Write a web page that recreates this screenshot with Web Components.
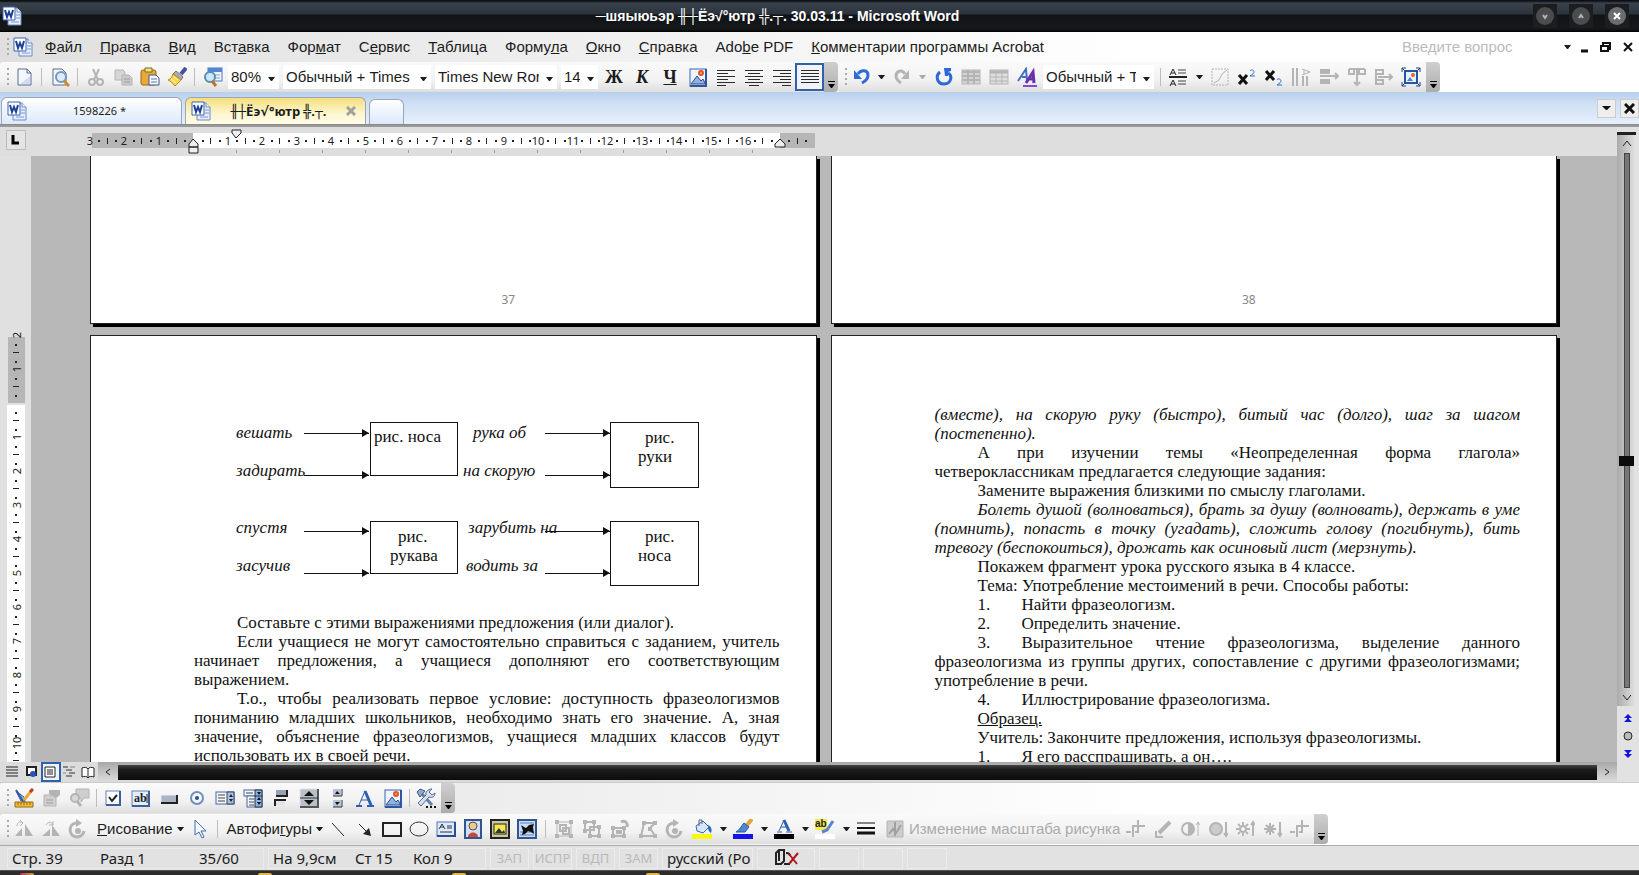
<!DOCTYPE html>
<html lang="ru">
<head>
<meta charset="utf-8">
<title>Microsoft Word</title>
<style>
	html, body {
		margin: 0;
		height: 100%;
		overflow: hidden;
		font: 15px/20px "Liberation Sans", "DejaVu Sans", sans-serif;
		color: #1c1c1c;
	}
</style>
</head>
<body>
<word-window></word-window>

<script>
const SVG = (body, w = 20, h = 20) => `<svg width="${w}" height="${h}" viewBox="0 0 ${w} ${h}" fill="none" aria-hidden="true">${body}</svg>`;

const G = '#b4b4b4';

const ICONS = {
	word: SVG('<path d="M6 2h9l4 4v13H6z" fill="#e6eefb" stroke="#6b8cc8"/><path d="M15 2v4h4" stroke="#6b8cc8" fill="#fff"/><path d="M14 9h4M14 12h4M9 16h8" stroke="#7d9ad0"/><path d="M1 1h12v13H1z" fill="#fff" stroke="#3d62b0"/><path d="M3 4l2 7 2-5 2 5 2-7" stroke="#1d3f94" stroke-width="2"/>'),
	page: SVG('<path d="M4 2h9l4 4v12H4z" fill="#f4f8fe" stroke="#5b6d8f"/><path d="M13 2v4h4" stroke="#5b6d8f"/><path d="M6 17h10V9z" fill="#cfdcf2"/>'),
	preview: SVG('<path d="M3 2h9l4 4v12H3z" fill="#f4f8fe" stroke="#5b6d8f"/><circle cx="11" cy="10" r="5" fill="#d9ecfb" stroke="#7795b8" stroke-width="2"/><path d="M14 14l5 5" stroke="#d08a2c" stroke-width="3"/>'),
	cut: SVG(`<path d="M7 2l5 11M13 2L8 13" stroke="${G}" stroke-width="2"/><circle cx="6" cy="15" r="3" stroke="${G}" stroke-width="2"/><circle cx="14" cy="15" r="3" stroke="${G}" stroke-width="2"/>`),
	copy: SVG(`<path d="M2 3h8l2 2v8H2z" fill="#d6d6d6" stroke="${G}"/><path d="M9 8h7l3 3v7H9z" fill="#cacaca" stroke="${G}"/><path d="M11 12h6M11 15h6" stroke="#999"/>`),
	paste: SVG('<rect x="1" y="3" width="15" height="15" rx="2" fill="#e9a93a" stroke="#9a6415"/><path d="M5 1h7v4H5z" fill="#f7e36c" stroke="#6d6d2c"/><path d="M9 8h7l3 3v7H9z" fill="#f5f9ff" stroke="#3f5680"/><path d="M11 12h6M11 15h6" stroke="#5b79b5"/>'),
	brush: SVG('<path d="M19 1l-5 6" stroke="#46529c" stroke-width="4"/><path d="M9 4l7 6-2 3-8-6z" fill="#a9adb5" stroke="#6d7077"/><path d="M6 7l8 6-6 6c-2-3-5-5-7-6 3-1 4-3 5-6z" fill="#f8d654" stroke="#b98a1c"/><path d="M4 12l5 4M7 10l4 3" stroke="#fff5b5"/>'),
	research: SVG('<rect x="5" y="1" width="14" height="13" fill="#eef4fd" stroke="#4d77bd"/><path d="M5 3h14" stroke="#4f86d8" stroke-width="4"/><path d="M8 8h9M10 11h7" stroke="#8aa6d4"/><circle cx="7" cy="10" r="5" fill="#c8e9fb" stroke="#5f8ca8" stroke-width="2"/><path d="M9 14l4 5" stroke="#b7772b" stroke-width="3"/>'),
	picture: SVG('<rect x="2" y="2" width="16" height="17" fill="#eef5ff" stroke="#3a66b2"/><path d="M18 2v17H2" stroke="#2b57a5" stroke-width="2"/><circle cx="13" cy="6" r="2" fill="#f6b23c" stroke="#e2512a" stroke-width="2"/><path d="M3 17l6-8 4 5 2-2 2 4v1z" fill="#8fb2e0" stroke="#2b4c88"/>'),
	left: SVG('<path d="M1 3h18M1 6h11M1 9h18M1 12h11M1 15h18M1 18h9" stroke="#2a2a2a" shape-rendering="crispEdges"/>'),
	center: SVG('<path d="M1 3h18M4 6h12M1 9h18M4 12h12M1 15h18M5 18h10" stroke="#2a2a2a" shape-rendering="crispEdges"/>'),
	right: SVG('<path d="M1 3h18M8 6h11M1 9h18M8 12h11M1 15h18M10 18h9" stroke="#2a2a2a" shape-rendering="crispEdges"/>'),
	justify: SVG('<path d="M1 3h18M1 6h18M1 9h18M1 12h18M1 15h18" stroke="#2a2a2a" shape-rendering="crispEdges"/>'),
	undo: SVG('<path d="M6 7c3-5 10-4 10 1 0 3-2 6-6 8" stroke="#2f6bd8" stroke-width="3"/><path d="M2 3v9h8z" fill="#2f6bd8"/>', 18),
	redo: SVG(`<path d="M12 7c-3-5-9-3-9 2 0 3 2 5 5 7" stroke="${G}" stroke-width="3"/><path d="M16 3v9H8z" fill="${G}"/>`, 18),
	reload: SVG('<path d="M6 5c-5 4-3 12 4 12s9-8 4-11" stroke="#2b69d6" stroke-width="3"/><path d="M10 1h7v3l-3 1v4h-3z" fill="#2b69d6"/>'),
	table: SVG(`<rect x="1" y="3" width="18" height="14" fill="#d4d4d4" stroke="${G}"/><path d="M1 5h18M1 9h18M1 13h18M7 3v14M13 3v14" stroke="${G}" stroke-width="2"/>`),
	table2: SVG(`<rect x="1" y="3" width="18" height="14" fill="#dedede" stroke="${G}"/><path d="M1 5h18" stroke="${G}" stroke-width="3"/><path d="M1 10h18M1 14h18M7 3v14M13 3v14" stroke="${G}"/>`),
	styles: SVG('<path d="M1 14L9 2l1 12M5 10h5" stroke="#3f6fc2" stroke-width="2"/><path d="M9 16l7-11 1 11M12 12h5" stroke="#6a2fae" stroke-width="3"/><path d="M6 19h14" stroke="#7b4fd0" stroke-width="2"/>'),
	spacing: SVG('<path d="M2 8l3-6 3 6M3 6h4M2 19l3-6 3 6M3 17h4" stroke="#222"/><path d="M1 10h18" stroke="#222" stroke-width="2"/><path d="M10 3h8M10 6h8M10 14h8M10 17h8" stroke="#444"/>'),
	chart: SVG(`<rect x="2" y="2" width="16" height="16" stroke="${G}" stroke-dasharray="2 1"/><path d="M4 16l5-3 3-6 5-4" stroke="${G}"/>`),
	vtext: SVG(`<path d="M2 1v18M6 1v18" stroke="${G}" stroke-width="2"/><path d="M12 9v10M16 9v10" stroke="${G}" stroke-width="2"/><path d="M11 2l8 3-8 3M13 3v4" stroke="${G}"/>`),
	alignA: SVG(`<path d="M1 2h10v5H1zM1 12h10v5H1z" fill="${G}"/><path d="M1 9h18M16 6l3 3-3 3" stroke="${G}" stroke-width="2"/>`),
	alignB: SVG(`<path d="M2 2h16M2 2v5h5V2M12 2v5h6V2M10 2v16M7 15l3 3 3-3" stroke="${G}" stroke-width="2"/>`),
	alignC: SVG(`<path d="M2 2v16M2 3h7v4H2M2 13h7v4H2M4 10h14M15 7l3 3-3 3" stroke="${G}" stroke-width="2"/>`),
	resize: SVG('<rect x="4" y="4" width="12" height="12" fill="#e8f1ff" stroke="#2456a8" stroke-width="2"/><circle cx="12" cy="8" r="2" fill="#e8642a"/><path d="M6 14l3-4 3 4z" fill="#5c7fbe"/><path d="M1 5V1h4M15 1h4v4M1 15v4h4M15 19h4v-4M1 1l4 4M19 1l-4 4M1 19l4-4M19 19l-4-4" stroke="#1e3f8c"/>'),
	design: SVG('<path d="M2 3l5 10 4 1-1-5z" fill="#a8cdf5" stroke="#2e5ca8"/><path d="M2 2l7 11" stroke="#2e5ca8" stroke-width="2"/><path d="M18 2l-8 10" stroke="#e9a93a" stroke-width="3"/><path d="M19 1l-3 3" stroke="#c23c2b" stroke-width="3"/><path d="M1 14h18v5H1z" fill="#f1bd35" stroke="#9a6b12"/><path d="M4 14v3M7 14v3M10 14v3M13 14v3M16 14v3" stroke="#9a6b12"/>'),
	props: SVG(`<path d="M2 7h12v11H2z" fill="#d0d0d0" stroke="${G}"/><path d="M7 2h11v5l-4 3-7-4z" fill="${G}"/><path d="M4 12h7M4 15h7" stroke="#999"/>`),
	code: SVG(`<path d="M6 1h13v9h-5l-3 4v-4H6z" fill="#cfcfcf" stroke="${G}"/><circle cx="5" cy="10" r="4" fill="#d8d8d8" stroke="${G}" stroke-width="2"/><path d="M7 13l4 5" stroke="${G}" stroke-width="3"/>`),
	check: SVG('<rect x="3" y="3" width="14" height="14" fill="#fff" stroke="#6482b3"/><path d="M17 3v14H3" stroke="#3b5f9c" stroke-width="2"/><path d="M6 9l3 4 5-6" stroke="#222" stroke-width="2"/>'),
	edit: SVG('<rect x="1" y="3" width="17" height="15" fill="#e3edfb" stroke="#6482b3"/><path d="M18 3v15H1" stroke="#3b5f9c" stroke-width="2"/><text x="3" y="14" font-size="12" font-weight="bold" font-family="Liberation Serif,serif" fill="#222">ab</text><path d="M16 6v9" stroke="#222"/>'),
	btn: SVG('<path d="M2 7h15v8H2z" fill="#aab4c4"/><path d="M2 15h16V7" stroke="#222" stroke-width="2"/><path d="M2 14V7h15" stroke="#e8edf5"/>'),
	radio: SVG('<circle cx="10" cy="10" r="6" fill="#f3f7fd" stroke="#6f8fc2" stroke-width="2"/><circle cx="10" cy="10" r="2" fill="#2c4f8c"/>'),
	list: SVG('<rect x="1" y="4" width="18" height="12" fill="#f3f7fd" stroke="#47699f"/><path d="M3 7h7M3 10h7M3 13h7" stroke="#444"/><path d="M12 4h7v12h-7z" fill="#a8c1e6" stroke="#345"/><path d="M14 9l2-3 2 3zM14 11l2 3 2-3z" fill="#223"/>'),
	combo: SVG('<rect x="1" y="2" width="18" height="6" fill="#f3f7fd" stroke="#47699f"/><rect x="4" y="8" width="15" height="11" fill="#f3f7fd" stroke="#47699f"/><path d="M3 5h7M6 11h5M6 14h5M6 17h5" stroke="#444"/><path d="M12 2h7v17h-7z" fill="#8fb0e0" stroke="#234"/><path d="M12 8h7" stroke="#234"/><path d="M14 4h4l-2 3zM14 12l2-3 2 3zM14 14l2 3 2-3z" fill="#112"/>'),
	toggle: SVG('<path d="M5 2h11v6H5z" fill="#97a2b2"/><path d="M5 8h11V2" stroke="#222" stroke-width="2"/><path d="M4 18v-6h11" stroke="#222" stroke-width="2"/><path d="M5 13h9v4H5z" fill="#e0e4ea"/>'),
	spin: SVG('<path d="M1 1h18v18H1z" fill="#b9bfc8"/><path d="M1 18V1h17" stroke="#e4e4e4"/><path d="M1 19h18V1" stroke="#555" stroke-width="2"/><path d="M5 8l5-5 5 5zM5 12l5 5 5-5z" fill="#111"/><path d="M1 10h18" stroke="#333"/>'),
	scroll: SVG('<path d="M6 1h8v7H6zM6 12h8v7H6z" fill="#b9c4d4"/><path d="M6 8h9V1M6 19h9v-7" stroke="#333"/><path d="M8 6l2-3 3 3zM8 14l2 3 3-3z" fill="#111"/>'),
	bigA: SVG('<path d="M4 17L10 3M6 12h8" stroke="#2c5fb0"/><path d="M10 3l6 14" stroke="#2c5fb0" stroke-width="3"/><path d="M1 18h6M12 18h7" stroke="#2c5fb0" stroke-width="2"/>'),
	tools: SVG('<path d="M5 5l11 12" stroke="#5f7faf" stroke-width="3"/><path d="M1 4l3-3 5 2-5 6z" fill="#8fa9cc" stroke="#44597b"/><path d="M16 1l-3 3 3 3 3-2c0 4-3 5-6 4l-8 9-3-3 8-8c-1-3 2-6 6-6z" fill="#d6e1f0" stroke="#50698f"/><path d="M10 19h2M14 19h2M18 19h2" stroke="#111" stroke-width="2"/>'),
	flipL: SVG(`<path d="M1 17L8 9v8zM11 17V5l8 12z" fill="${G}"/><path d="M3 7c0-4 4-5 6-3M6 1l3 3-3 3" stroke="${G}"/>`),
	flipR: SVG(`<path d="M1 17l8-7v7zM11 17V6l8 11z" fill="${G}"/><path d="M5 6c2-4 6-3 7 0M12 2v4H8" stroke="${G}"/>`),
	rotate: SVG(`<path d="M8 4a7 7 0 1 0 8 8" stroke="${G}" stroke-width="3"/><path d="M8 0v8l6-4z" fill="${G}"/><circle cx="10" cy="12" r="3" fill="${G}"/>`),
	cursor: SVG('<path d="M6 1v15l4-3 3 6 2-1-3-6h5z" fill="#f4f9ff" stroke="#3f6cae"/>'),
	line: SVG('<path d="M4 4l12 13" stroke="#222"/>'),
	arrow: SVG('<path d="M4 5l9 9" stroke="#222"/><path d="M16 17l-2-8-6 6z" fill="#222"/>'),
	rect: SVG('<rect x="1" y="4" width="18" height="13" stroke="#222" stroke-width="2"/>'),
	oval: SVG('<ellipse cx="10" cy="10" rx="9" ry="7" stroke="#333"/>'),
	textbox: SVG('<rect x="1" y="3" width="18" height="14" fill="#dce9fb" stroke="#4a74b6"/><path d="M19 3v14H1" stroke="#2a4f91" stroke-width="2"/><path d="M3 10l3-5 3 5M4 8h4M11 7h5M11 9h5M4 13h12" stroke="#333"/>'),
	clip: SVG('<rect x="2" y="1" width="16" height="18" fill="#cfe0f8" stroke="#33558f" stroke-width="2"/><circle cx="10" cy="7" r="4" fill="#f0c69c" stroke="#553"/><path d="M5 18c0-6 10-6 10 0z" fill="#c84a32"/>'),
	photo: SVG('<rect x="1" y="1" width="18" height="18" fill="#c9c9a0" stroke="#222" stroke-width="2"/><rect x="4" y="5" width="12" height="10" fill="#f6e754" stroke="#222"/><path d="M5 14l4-5 3 4 2-2 1 3z" fill="#333"/>'),
	wordart: SVG('<rect x="1" y="1" width="18" height="18" fill="#cadcf6" stroke="#33558f" stroke-width="2"/><path d="M3 4h14M3 16h14M3 13h14" stroke="#5a7fbd"/><path d="M4 6l3 2 2 1 3-3 5-1-1 3 1 7-3-2-3-1-3 3-3 1 1-4z" fill="#111"/>'),
	group: SVG(`<path d="M3 3h14v14H3z" stroke="${G}"/><path d="M6 6h6v6H6zM9 9h6v6H9z" stroke="${G}" stroke-width="2"/><path d="M1 1h4v4H1zM15 1h4v4h-4zM1 15h4v4H1zM15 15h4v4h-4z" fill="${G}"/>`),
	ungroup: SVG(`<path d="M3 3h9v8H3zM8 8h9v9H8z" stroke="${G}" stroke-width="2"/><path d="M1 1h4v4H1zM10 1h4v4h-4zM1 10h4v4H1zM15 15h4v4h-4zM6 15h4v4H6zM15 6h4v4h-4z" fill="${G}"/>`),
	regroup: SVG(`<path d="M3 9h11v8H3z" stroke="${G}" stroke-width="2"/><path d="M6 11h6v4H6zM1 7h4v4H1zM12 7h4v4h-4zM1 15h4v4H1zM12 15h4v4h-4z" fill="${G}"/><path d="M11 3c4-2 7 1 6 5" stroke="${G}" stroke-width="3"/>`),
	edges: SVG(`<path d="M3 17h14L12 9l5-5H6z" stroke="${G}" stroke-width="2"/><path d="M1 15h4v4H1zM15 15h4v4h-4zM4 2h4v4H4zM15 2h4v4h-4zM10 8h4v4h-4z" fill="${G}"/>`),
	fill: SVG('<path d="M4 7l7-5 6 6-6 6-6-2z" fill="#d6e6fb" stroke="#3666ab"/><path d="M7 7V1h3v4" stroke="#567"/><path d="M16 6c4 2 4 5 3 8-3-2-3-4-3-8z" fill="#2c68c8"/><path d="M0 15h20v5H0z" fill="#f8f814"/>'),
	pen: SVG('<path d="M19 0l-6 7" stroke="#e8a23c" stroke-width="4"/><path d="M11 4l5 4-4 5H3c4-2 5-6 8-9z" fill="#4f86d6" stroke="#2a58a0"/><path d="M0 15h20v5H0z" fill="#1414e6"/>'),
	colorA: SVG('<path d="M5 12L10 1M7 8h6" stroke="#2c5fb0"/><path d="M10 1l5 11" stroke="#2c5fb0" stroke-width="3"/><path d="M3 13h5M12 13h6" stroke="#2c5fb0"/><path d="M0 15h20v5H0z" fill="#000"/>'),
	mark: SVG('<path d="M0 0h12v11H0z" fill="#f5ea50"/><text x="0" y="8" font-size="10" font-weight="bold" font-family="Liberation Sans,sans-serif" fill="#222">ab</text><path d="M18 2l-6 9-5 2" stroke="#5a86c8" stroke-width="3"/><path d="M0 15h20v5H0z" fill="#fff"/>'),
	lines: SVG('<path d="M1 4h18" stroke="#111"/><path d="M1 9h18" stroke="#111" stroke-width="2"/><path d="M1 14h18" stroke="#111" stroke-width="3"/>'),
	scalePic: SVG(`<path d="M2 2h16v16H2z" fill="#cdcdcd" stroke="${G}"/><path d="M4 15l4-5 3 4 5-8M10 3v14" stroke="#a0a0a0" stroke-width="2"/>`),
	crop: SVG(`<path d="M0 13h5M7 18V7h12M12 1v12H9" stroke="${G}" stroke-width="2"/>`),
	dropper: SVG(`<path d="M17 3L6 14" stroke="${G}" stroke-width="4"/><path d="M3 12v6h7" stroke="${G}" stroke-width="2"/>`),
	contrastUp: SVG(`<circle cx="8" cy="10" r="6" stroke="${G}" stroke-width="2"/><path d="M8 4a6 6 0 0 1 0 12z" fill="${G}"/><path d="M18 17V3M16 6l2-3 2 3" stroke="${G}"/>`),
	contrastDown: SVG(`<circle cx="8" cy="10" r="6" fill="#ccc" stroke="${G}" stroke-width="2"/><path d="M18 3v14M16 14l2 3 2-3" stroke="${G}" stroke-width="2"/>`),
	brightUp: SVG(`<circle cx="8" cy="10" r="3" stroke="${G}" stroke-width="2"/><path d="M8 3v3M8 14v3M1 10h3M12 10h3M3 5l2 2M11 13l2 2M3 15l2-2M11 7l2-2M18 17V3M16 6l2-3 2 3" stroke="${G}" stroke-width="2"/>`),
	brightDown: SVG(`<circle cx="8" cy="10" r="3" fill="${G}"/><path d="M8 4v12M2 10h12M4 6l8 8M4 14l8-8M18 3v14M16 14l2 3 2-3" stroke="${G}" stroke-width="2"/>`),
	vNormal: SVG('<path d="M1 2h12M1 5h12M1 8h12M1 11h12" stroke="#222"/>', 14, 14),
	vWeb: SVG('<path d="M3 2h9v8H3z" fill="#fff" stroke="#222" stroke-width="2"/><circle cx="9" cy="9" r="3" fill="#2457b5"/>', 14, 14),
	vPage: SVG('<path d="M2 2h10v10H2z" fill="#fff" stroke="#222"/><path d="M4 5h6M4 7h6M4 9h6" stroke="#222"/>', 14, 14),
	vOutline: SVG('<path d="M1 2h5M4 5h6M7 8h6M4 11h6" stroke="#333"/><path d="M8 2h5M1 8h3" stroke="#888"/>', 14, 14),
	vRead: SVG('<path d="M1 3c2-1 5-1 6 1 1-2 4-2 6-1v9c-2-1-5-1-6 1-1-2-4-2-6-1zM7 4v9" fill="#fff" stroke="#222"/>', 14, 14),
	spell: SVG('<path d="M2 15V5l3-3h5v11l-3 3H2zM5 13V3" stroke="#222" stroke-width="2"/><path d="M12 5c3 0 4 1 4 3M10 16h6" stroke="#222" stroke-width="2"/><path d="M15 6l8 10M24 5l-9 11" stroke="#b01818" stroke-width="2"/>', 25)
};

const DROP = '<svg class="drop" width="7" height="4" viewBox="0 0 7 4" aria-hidden="true"><path d="M0 0h7L4 4H3z" fill="currentColor"/></svg>';

class ToolButton extends HTMLElement {
	connectedCallback() {
		const icon = ICONS[this.getAttribute('icon')] || '';
		const label = this.getAttribute('label');
		this.attachShadow({ mode: 'open' }).innerHTML = `
			<style>
				:host { display: flex; flex: none; height: 26px; }
				button {
					display: flex;
					align-items: center;
					justify-content: center;
					gap: 4px;
					min-width: var(--tool, 28px);
					padding: 0;
					border: 0;
					background: none;
					font: inherit;
					color: inherit;
					white-space: nowrap;
				}
				:host([split]) button { gap: 8px; padding: 0 4px; width: 41px; box-sizing: border-box; }
				:host([text]) button { padding: 0 2px 0 5px; }
				:host([off]) { color: #aaa; }
				:host([on]) button { outline: 2px solid #2f62a8; outline-offset: -1px; background: #f1f3f7; }
				svg { flex: none; }
			</style>
			<button type="button" ${label ? `aria-label="${label}"` : ''}>${icon}<slot></slot>${this.hasAttribute('split') || this.hasAttribute('drop') ? DROP : ''}</button>
		`;
	}
}

class ToolSeparator extends HTMLElement {
	connectedCallback() {
		this.attachShadow({ mode: 'open' }).innerHTML = `
			<style>
				:host { display: block; flex: none; width: 1px; height: 18px; margin: 0 var(--sep, 4px); background: #bdbdbd; }
			</style>
		`;
	}
}

class ToolCombo extends HTMLElement {
	connectedCallback() {
		this.attachShadow({ mode: 'open' }).innerHTML = `
			<style>
				:host { display: flex; flex: none; height: 24px; margin: 0 2px; align-items: center; background: #fff; position: relative; box-sizing: border-box; }
				select {
					appearance: none;
					width: 100%;
					height: 24px;
					border: 0;
					padding: 0 18px 0 3px;
					background: none;
					font: inherit;
					color: inherit;
				}
				.drop { position: absolute; right: 4px; bottom: 8px; pointer-events: none; }
			</style>
			<select aria-label="${this.getAttribute('label')}"><option>${this.getAttribute('value')}</option></select>${DROP}
		`;
	}
}

class ToolBar extends HTMLElement {
	connectedCallback() {
		this.attachShadow({ mode: 'open' }).innerHTML = `
			<style>
				:host {
					display: flex;
					align-items: center;
					flex: none;
					height: 30px;
					box-sizing: border-box;
					background: linear-gradient(#fafafa, #f2f2f2 60%, #dedede);
					border-radius: 3px;
				}
				.grip { flex: none; width: 2px; height: 18px; margin: 0 1px 0 7px; background: repeating-linear-gradient(#a9a9a9 0 2px, transparent 2px 5px); }
				.cap {
					align-self: stretch;
					display: flex;
					align-items: flex-end;
					justify-content: center;
					width: 14px;
					margin-left: 1px;
					padding: 0 0 4px;
					border: 0;
					border-radius: 0 4px 4px 0;
					background: linear-gradient(#cfcfcf, #adadad);
				}
				:host([plain]) { background: none; }
			</style>
			<span class="grip"></span>
			<slot></slot>
			${this.hasAttribute('plain') ? '' : '<button class="cap" type="button" aria-label="Параметры панели"><svg width="7" height="7" viewBox="0 0 7 7"><path d="M0 0h7v1H0zM0 3h7L4 7H3z" fill="#000"/></svg></button>'}
		`;
	}
}

class TitleBar extends HTMLElement {
	connectedCallback() {
		this.attachShadow({ mode: 'open' }).innerHTML = `
			<style>
				:host {
					display: flex;
					align-items: center;
					flex: none;
					height: 32px;
					padding: 0 10px 0 2px;
					box-sizing: border-box;
					background: linear-gradient(#0d1115 0 1px, #3a424c 3px, #2c333b 14px, #101317 15px, #15191b 29px, #000 32px);
					color: #fff;
				}
				h1 { flex: 1; margin: 0; text-align: center; font: bold 14px/20px "Liberation Sans", "DejaVu Sans", sans-serif; }
				div { display: flex; gap: 12px; }
				button { width: 24px; height: 24px; padding: 0; border: 0; background: #1b1d1f; }
				button svg { display: block; }
			</style>
			${ICONS.word}
			<h1><slot></slot></h1>
			<div>
				${[['Свернуть', 'M10 11l2 3 2-3', '#4a4d50', '#b4b4b4'], ['Развернуть', 'M10 14l2-3 2 3', '#4a4d50', '#b4b4b4'], ['Закрыть', 'M9 9l6 6M15 9l-6 6', '#6b6e70', '#fff']].map(([name, d, tone, ink]) => `
				<button type="button" aria-label="${name}">${SVG(`<circle cx="12" cy="12" r="9" fill="${tone}"/><path d="${d}" stroke="${ink}" stroke-width="2"/>`, 24, 24)}</button>`).join('')}
			</div>
		`;
	}
}

class MenuItem extends HTMLElement {
	connectedCallback() {
		this.attachShadow({ mode: 'open' }).innerHTML = `
			<style>
				:host { display: block; flex: none; }
				button { padding: 0 9px; border: 0; background: none; font: inherit; color: inherit; white-space: nowrap; }
			</style>
			<button type="button"><slot></slot></button>
		`;
	}
}

class DocTab extends HTMLElement {
	connectedCallback() {
		this.attachShadow({ mode: 'open' }).innerHTML = `
			<style>
				:host {
					display: flex;
					align-items: center;
					width: 181px;
					height: 27px;
					box-sizing: border-box;
					padding: 0 9px 0 5px;
					border: 1px solid #9aa5b8;
					border-bottom: 0;
					border-radius: 6px 6px 0 0;
					background: linear-gradient(#fff, #dce9fb);
					font: 11px/16px "Noto Sans", "DejaVu Sans", sans-serif;
				}
				:host([active]) { background: linear-gradient(#f5df7c, #fdf6cf 60%, #fffbe6); font-size: 13px; font-weight: bold; }
				:host([empty]) { width: 35px; height: 25px; }
				a { flex: 1; text-align: center; color: inherit; text-decoration: none; white-space: nowrap; }
				button { padding: 0; border: 0; background: none; }
				button svg { display: block; }
			</style>
			${this.hasAttribute('empty') ? '' : ICONS.word + '<a href="#"><slot></slot></a>'}
			${this.hasAttribute('active') ? `<button type="button" aria-label="Закрыть">${SVG('<path d="M1 1l8 8M9 1l-8 8" stroke="#a0a0a0" stroke-width="3"/>', 10, 10)}</button>` : ''}
		`;
	}
}

// Centimetre scale with quarter marks, counted both ways from "zero".
class RulerScale extends HTMLElement {
	connectedCallback() {
		const vertical = this.hasAttribute('vertical');
		const zero = +this.getAttribute('zero');
		const from = +this.getAttribute('from');
		const end = +this.getAttribute('end');
		const total = +this.getAttribute('total');
		const step = vertical ? 34 : 34.5;
		const first = Math.ceil((from - zero) / step * 4 - 0.3);
		const last = Math.floor((total - zero - 2) / step * 4);
		let marks = '';
		for (let i = first; i <= last; i++) {
			if (i === 0) continue;
			const p = Math.round(zero + i * step / 4);
			const n = Math.abs(i / 4);
			if (Number.isInteger(n)) {
				if (p > end - 10) continue;
				marks += vertical
					? `<text transform="translate(21 ${p}) rotate(-90)" text-anchor="middle">${n}</text>`
					: `<text x="${p}" y="12" text-anchor="middle">${n}</text>`;
			} else {
				const len = i % 2 ? 2 : 6;
				marks += vertical
					? `<rect x="${16 - len / 2}" y="${p}" width="${len}" height="${i % 2 ? 2 : 1}"/>`
					: `<rect x="${p}" y="${8 - len / 2}" width="${i % 2 ? 2 : 1}" height="${len}"/>`;
			}
		}
		let extra = '';
		if (!vertical) {
			for (let x = zero + 43; x < end; x += 43) extra += `<rect x="${x}" y="17" width="1" height="3" fill="#999"/>`;
			extra += `<path d="M${zero - 4} 14v-3l4-5 5 5v3zM${zero - 4} 14h9v6h-9z" fill="#eee" stroke="#222"/>
				<path d="M${zero + 39}-3h9v3l-5 5-4-5z" fill="#eee" stroke="#222"/>
				<path d="M${end - 5} 14v-3l5-5 5 5v3z" fill="#eee" stroke="#222"/>`;
		}
		const body = vertical
			? `<rect x="8" y="${from}" width="17" height="${zero - from}" fill="#b6b6b6"/><rect x="7" y="${zero + 2}" width="18" height="${end - zero}" fill="#fff"/>`
			: `<rect x="${from}" width="${zero - from}" height="15" fill="#b6b6b6"/><rect x="${zero}" width="${end - zero}" height="15" fill="#fff"/><rect x="${end}" width="${total - end}" height="15" fill="#b6b6b6"/>`;
		this.attachShadow({ mode: 'open' }).innerHTML = `
			<style>
				:host { display: block; }
				svg { display: block; overflow: visible; font: 11px "Noto Sans", sans-serif; fill: #222; }
			</style>
			<svg width="${vertical ? 31 : total}" height="${vertical ? total : 15}">${body}${marks}${extra}</svg>
		`;
	}
}

class DocPage extends HTMLElement {
	connectedCallback() {
		this.attachShadow({ mode: 'open' }).innerHTML = `
			<style>
				:host {
					display: block;
					flex: 1;
					min-width: 0;
					box-sizing: border-box;
					padding: 69px 36px 0 103px;
					background: #fff;
					border: 1px solid #222;
					box-shadow: 3px 3px 0 #000;
					font: 17px/19px "Liberation Serif", serif;
					color: #111;
				}
				:host([tail]) { display: flex; align-items: flex-end; justify-content: center; padding: 0 0 14px 110px; border-top: 0; font: 12px/18px "Noto Sans", sans-serif; color: #888; }
				::slotted(p) { margin: 0; text-indent: 43px; text-align: justify; }
				::slotted(p.cont) { text-indent: 0; }
			</style>
			<slot></slot>
		`;
	}
}

class PhraseDiagram extends HTMLElement {
	connectedCallback() {
		const boxes = [[176, 17, 87, 53], [176, 116, 87, 52], [416, 17, 88, 65], [416, 116, 88, 64]];
		const arrows = [[110, 28], [110, 70], [110, 126], [110, 168], [351, 28], [351, 70], [351, 126], [351, 168]];
		const words = [[42, 33, 'вешать'], [42, 71, 'задирать'], [42, 128, 'спустя'], [42, 166, 'засучив'], [279, 33, 'рука об'], [269, 71, 'на скорую'], [274, 128, 'зарубить на'], [272, 166, 'водить за']];
		const captions = [[180, 37, 'рис. носа'], [204, 137, 'рис.'], [196, 156, 'рукава'], [451, 38, 'рис.'], [444, 57, 'руки'], [451, 137, 'рис.'], [444, 156, 'носа']];
		const text = ([x, y, s]) => `<text x="${x}" y="${y}">${s}</text>`;
		this.attachShadow({ mode: 'open' }).innerHTML = `
			<style>
				:host { display: block; }
				svg { display: block; width: 100%; height: 208px; fill: #111; }
			</style>
			<svg>
				<g font-style="italic">${words.map(text).join('')}</g>
				${captions.map(text).join('')}
				<g fill="none" stroke="#111" shape-rendering="crispEdges">
					${boxes.map(([x, y, w, h]) => `<rect x="${x}" y="${y}" width="${w}" height="${h}"/>`).join('')}
					${arrows.map(([x, y]) => `<path d="M${x} ${y}h65"/>`).join('')}
				</g>
				${arrows.map(([x, y]) => `<path d="M${x + 58} ${y - 4}l7 4-7 4z"/>`).join('')}
			</svg>
		`;
	}
}

class StatusCell extends HTMLElement {
	connectedCallback() {
		this.attachShadow({ mode: 'open' }).innerHTML = `
			<style>
				:host {
					display: flex;
					align-items: center;
					flex: none;
					height: 21px;
					box-sizing: border-box;
					padding: 0 4px;
					overflow: hidden;
					white-space: nowrap;
					border: 1px solid #ececec;
				}
				:host([off]) { color: #b9b9b9; justify-content: center; padding: 0; font-size: 13px; }
			</style>
			<slot></slot>
		`;
	}
}

class WordWindow extends HTMLElement {
	connectedCallback() {
		this.attachShadow({ mode: 'open' }).innerHTML = `
			<style>
				:host { display: flex; flex-direction: column; height: 100vh; overflow: hidden; background: #e2e2e2; }
				.menu, .bars { display: flex; align-items: center; flex: none; background: linear-gradient(90deg, #dfdfdf, #fff 70%); }
				.menu { height: 30px; --tool: 26px; }
				.menu .ask { display: flex; align-items: center; gap: 4px; margin-left: auto; padding-right: 2px; }
				.menu input { width: 158px; border: 0; padding: 0; background: none; font: inherit; color: #bbb; }
				.menu input::placeholder { color: #bbb; opacity: 1; }
				.bars.top { height: 30px; --tool: 27px; }
				.bars .wide { --tool: 28px; }
				.plain { width: 18px; height: 18px; padding: 0; border: 0; background: none; }
				.plain svg { display: block; margin: auto; }
				.letter { font: bold 18px/20px "Liberation Serif", serif; }
				i.letter { font-style: italic; }
				.zoom { width: 51px; }
				.style { width: 148px; }
				.font { width: 122px; }
				.size { width: 37px; }
				.fmt { width: 111px; }
				.tabs {
					display: flex;
					align-items: flex-end;
					flex: none;
					height: 32px;
					gap: 3px;
					padding-left: 1px;
					background: linear-gradient(#b8cfec, #cfdff5 35%, #e6f0fc);
					border-bottom: 1px solid #8b8b8b;
				}
				.tabs div { display: flex; align-self: center; gap: 4px; margin-left: auto; }
				.tabs div button { width: 19px; height: 19px; border: 1px solid #ccc; background: #eee; }
				.work { display: flex; flex: 1; min-height: 0; border-top: 2px solid #999; }
				.left { display: flex; flex-direction: column; flex: 1; min-width: 0; }
				.ruler { display: flex; flex: none; height: 29px; position: relative; background: #dedede; }
				.ruler .stop { width: 20px; height: 20px; margin: 3px 0 0 6px; padding: 0; border: 1px solid #bbb; background: #e4e4e4; box-sizing: border-box; }
				.ruler ruler-scale { position: absolute; left: 0; top: 6px; }
				.canvas { display: flex; flex: 1; min-height: 0; overflow: hidden; background: #b8b8b8; }
				.canvas > ruler-scale { flex: none; width: 31px; background: #e0e0e0; }
				.sheets { flex: 1; min-width: 0; padding: 0 60px 0 59px; }
				.pair { display: flex; gap: 14px; }
				.tail { height: 168px; margin-bottom: 11px; }
				.body { height: 520px; }
				.num { display: inline-block; width: 44px; text-indent: 0; }
				.bottom { display: flex; align-items: center; flex: none; height: 20px; background: #dcdcdc; }
				.views { display: flex; gap: 1px; padding-left: 4px; width: 94px; }
				.views button { width: 18px; height: 18px; padding: 1px; border: 0; background: none; box-sizing: border-box; }
				.views button.on { outline: 2px solid #2f62a8; outline-offset: -1px; background: #eef2fa; }
				.views svg { display: block; }
				.track { display: flex; flex: 1; align-items: center; background: linear-gradient(#a8a8a8, #ddd); height: 20px; }
				.track button { width: 20px; padding: 0; border: 0; background: none; color: #222; height: 16px; }
				.track i { flex: 1; height: 15px; background: linear-gradient(#454545, #1c1c1c 30%, #0c0c0c); }
				.vscroll { display: flex; flex-direction: column; align-items: center; flex: none; width: 22px; background: #e2e2e2; }
				.vscroll .bar { display: flex; flex-direction: column; align-items: center; flex: 1; width: 19px; margin: 5px 3px 0 0; border-top: 3px solid #222; background: linear-gradient(90deg, #aaa, #e4e4e4); }
				.vscroll .rail { display: flex; flex-direction: column; align-items: center; justify-content: center; flex: 1; width: 4px; padding-top: 80px; border: 1px solid #444; background: #777; }
				.vscroll .thumb { flex: none; width: 15px; height: 10px; background: #0c0c0c; }
				.vscroll nav { display: flex; flex-direction: column; align-items: center; width: 19px; height: 76px; padding-top: 3px; box-sizing: border-box; }
				.bars.forms { height: 31px; border-top: 1px solid #ccc; box-sizing: border-box; --tool: 28px; --sep: 2px; }
				.bars.draw { height: 32px; --tool: 27px; }
				.status {
					display: flex;
					align-items: center;
					flex: none;
					height: 25px;
					gap: 4px;
					padding-left: 7px;
					box-sizing: border-box;
					border-top: 1px solid #aaa;
					font: 15px/18px "Noto Sans", "DejaVu Sans", sans-serif;
				}
				.where { width: 257px; }
				.where span:first-child { width: 88px; }
				.where span:nth-child(2) { width: 99px; }
				.pos { width: 218px; }
				.pos span { width: 58px; }
				.pos span:first-child { width: 82px; }
				.mode { width: 39px; }
				.lang { width: 91px; }
				.book { width: 58px; justify-content: center; }
				.blank { width: 40px; }
				.desk { display: flex; flex: none; gap: 180px; height: 5px; padding-left: 20px; background: #2c2c2c; border-top: 1px solid #555; box-sizing: border-box; }
				.desk span { width: 14px; height: 3px; margin-top: 2px; background: #e0b84a; border-radius: 2px 2px 0 0; }
				.desk span:first-child { background: linear-gradient(90deg, #c02a6a, #c8b040); margin-right: 44px; }
			</style>
			<title-bar>─шяыюьэр ╫┼Ёэ√°ютр ╬.┬. 30.03.11 - Microsoft Word</title-bar>
			<div class="menu">
				<tool-bar plain><tool-button icon="word" label="Документ"></tool-button></tool-bar>
				<menu-item><u>Ф</u>айл</menu-item><menu-item><u>П</u>равка</menu-item><menu-item><u>В</u>ид</menu-item><menu-item>Вст<u>а</u>вка</menu-item><menu-item>Фор<u>м</u>ат</menu-item><menu-item>С<u>е</u>рвис</menu-item><menu-item><u>Т</u>аблица</menu-item><menu-item>Форму<u>л</u>а</menu-item><menu-item><u>О</u>кно</menu-item><menu-item><u>С</u>правка</menu-item><menu-item>Ado<u>b</u>e PDF</menu-item><menu-item><u>К</u>омментарии программы Acrobat</menu-item>
				<div class="ask">
					<input type="text" aria-label="Введите вопрос" placeholder="Введите вопрос">
					${DROP}
					<button class="plain" type="button" aria-label="Свернуть">${SVG('<path d="M1 10h7" stroke="#111" stroke-width="3"/>', 9, 12)}</button>
					<button class="plain" type="button" aria-label="Восстановить">${SVG('<path d="M3 4V2h7v6H8M1 5h7v5H1z" stroke="#111" stroke-width="2"/>', 12, 12)}</button>
					<button class="plain" type="button" aria-label="Закрыть">${SVG('<path d="M1 1l8 8M9 1l-8 8" stroke="#111" stroke-width="2"/>', 10, 10)}</button>
				</div>
			</div>
			<div class="bars top">
				<tool-bar>
					<tool-button icon="page" label="Создать"></tool-button>
					<tool-separator></tool-separator>
					<tool-button icon="preview" label="Просмотр"></tool-button>
					<tool-separator></tool-separator>
					<tool-button icon="cut" label="Вырезать" off></tool-button>
					<tool-button icon="copy" label="Копировать" off></tool-button>
					<tool-button icon="paste" label="Вставить"></tool-button>
					<tool-button icon="brush" label="Формат по образцу"></tool-button>
					<tool-separator></tool-separator>
					<tool-button icon="research" label="Справочные материалы"></tool-button>
					<tool-combo class="zoom" label="Масштаб" value="80%"></tool-combo>
					<tool-combo class="style" label="Стиль" value="Обычный + Times"></tool-combo>
					<tool-combo class="font" label="Шрифт" value="Times New Ror"></tool-combo>
					<tool-combo class="size" label="Размер" value="14"></tool-combo>
					<tool-button class="wide"><b class="letter">Ж</b></tool-button>
					<tool-button class="wide"><i class="letter">К</i></tool-button>
					<tool-button class="wide"><u class="letter">Ч</u></tool-button>
					<tool-button class="wide" icon="picture" label="Рисунок"></tool-button>
					<tool-button class="wide" icon="left" label="По левому краю"></tool-button>
					<tool-button class="wide" icon="center" label="По центру"></tool-button>
					<tool-button class="wide" icon="right" label="По правому краю"></tool-button>
					<tool-button icon="justify" label="По ширине" on></tool-button>
				</tool-bar>
				<tool-bar>
					<tool-button icon="undo" label="Отменить" split></tool-button>
					<tool-button icon="redo" label="Вернуть" split off></tool-button>
					<tool-button icon="reload" label="Обновить"></tool-button>
					<tool-button class="wide" icon="table" label="Таблица" off></tool-button>
					<tool-button class="wide" icon="table2" label="Столбцы" off></tool-button>
					<tool-button class="wide" icon="styles" label="Стили"></tool-button>
					<tool-combo class="fmt" label="Стиль абзаца" value="Обычный + Т"></tool-combo>
					<tool-separator></tool-separator>
					<tool-button icon="spacing" label="Интервал" split></tool-button>
					<tool-button icon="chart" label="Диаграмма" off></tool-button>
					<tool-button label="Надстрочный">${SVG('<path d="M2 8l8 9M10 8l-8 9" stroke="#111" stroke-width="3"/><path d="M13 4c1-2 4-1 4 1 0 1-1 2-4 4h5" stroke="#2f6bd8"/>')}</tool-button>
					<tool-button label="Подстрочный">${SVG('<path d="M2 4l8 9M10 4l-8 9" stroke="#111" stroke-width="3"/><path d="M13 13c1-2 4-1 4 1 0 1-1 2-4 4h5" stroke="#2f6bd8"/>')}</tool-button>
					<tool-button class="wide" icon="vtext" label="Направление" off></tool-button>
					<tool-button class="wide" icon="alignA" label="Выровнять по левому" off></tool-button>
					<tool-button icon="alignB" label="Выровнять по верху" off></tool-button>
					<tool-button icon="alignC" label="Выровнять по центру" off></tool-button>
					<tool-button class="wide" icon="resize" label="Размер рисунка"></tool-button>
				</tool-bar>
			</div>
			<div class="tabs">
				<doc-tab>1598226 *</doc-tab>
				<doc-tab active>╫┼Ёэ√°ютр ╬.┬.</doc-tab>
				<doc-tab empty></doc-tab>
				<div>
					<button class="plain" type="button" aria-label="Список">${SVG('<path d="M0 1h9L5 5H4z" fill="#111"/>', 9, 6)}</button>
					<button class="plain" type="button" aria-label="Закрыть">${SVG('<path d="M1 1l9 9M10 1l-9 9" stroke="#111" stroke-width="3"/>', 11, 11)}</button>
				</div>
			</div>
			<div class="work">
				<div class="left">
					<div class="ruler">
						<button class="stop" type="button" aria-label="Табуляция">${SVG('<path d="M6 4v8h6" stroke="#000" stroke-width="3"/>', 18, 18)}</button>
						<ruler-scale from="92" zero="193" end="780" total="815"></ruler-scale>
					</div>
					<div class="canvas">
						<ruler-scale vertical from="181" zero="247" end="640" total="640"></ruler-scale>
						<div class="sheets">
							<div class="pair tail">
								<doc-page tail>37</doc-page>
								<doc-page tail>38</doc-page>
							</div>
							<div class="pair body">
								<doc-page>
									<phrase-diagram></phrase-diagram>
									<p>Составьте с этими выражениями предложения (или диалог).</p>
									<p>Если учащиеся не могут самостоятельно справиться с заданием, учитель начинает предложения, а учащиеся дополняют его соответствующим выражением.</p>
									<p>Т.о., чтобы реализовать первое условие: доступность фразеологизмов пониманию младших школьников, необходимо знать его значение. А, зная значение, объяснение фразеологизмов, учащиеся младших классов будут использовать их в своей речи.</p>
								</doc-page>
								<doc-page>
									<p class="cont"><i>(вместе), на скорую руку (быстро), битый час (долго), шаг за шагом (постепенно).</i></p>
									<p>А при изучении темы «Неопределенная форма глагола» четвероклассникам предлагается следующие задания:</p>
									<p>Замените выражения близкими по смыслу глаголами.</p>
									<p><i>Болеть душой (волноваться), брать за душу (волновать), держать в уме (помнить), попасть в точку (угадать), сложить голову (погибнуть), бить тревогу (беспокоиться), дрожать как осиновый лист (мерзнуть).</i></p>
									<p>Покажем фрагмент урока русского языка в 4 классе.</p>
									<p>Тема: Употребление местоимений в речи. Способы работы:</p>
									<p><span class="num">1.</span>Найти фразеологизм.</p>
									<p><span class="num">2.</span>Определить значение.</p>
									<p><span class="num">3.</span>Выразительное чтение фразеологизма, выделение данного фразеологизма из группы других, сопоставление с другими фразеологизмами; употребление в речи.</p>
									<p><span class="num">4.</span>Иллюстрирование фразеологизма.</p>
									<p><u>Образец.</u></p>
									<p>Учитель: Закончите предложения, используя фразеологизмы.</p>
									<p><span class="num">1.</span>Я его расспрашивать, а он….</p>
								</doc-page>
							</div>
						</div>
					</div>
					<div class="bottom">
						<div class="views">
							${[['vNormal', 'Обычный'], ['vWeb', 'Веб-документ'], ['vPage', 'Разметка страницы'], ['vOutline', 'Структура'], ['vRead', 'Режим чтения']].map(([icon, name]) => `<button type="button" class="${icon === 'vPage' ? 'on' : ''}" aria-label="${name}">${ICONS[icon]}</button>`).join('')}
						</div>
						<div class="track">
							<button type="button" aria-label="Влево">${SVG('<path d="M7 2L3 5l4 3" stroke="#222"/>', 10, 10)}</button><i></i><button type="button" aria-label="Вправо">${SVG('<path d="M3 2l4 3-4 3" stroke="#222"/>', 10, 10)}</button>
						</div>
					</div>
				</div>
				<div class="vscroll">
					<div class="bar">
						<button class="plain" type="button" aria-label="Вверх">${SVG('<path d="M1 7l4-5 4 5" stroke="#222"/>', 10, 10)}</button>
						<div class="rail"><div class="thumb"></div></div>
						<button class="plain" type="button" aria-label="Вниз">${SVG('<path d="M1 3l4 5 4-5" stroke="#222"/>', 10, 10)}</button>
					</div>
					<nav>
						<button class="plain" type="button" aria-label="Предыдущая страница">${SVG('<path d="M4 0l4 4H5v1l3 3H0l3-3V4H0z" fill="#1111e0"/>', 8, 8)}</button>
						<button class="plain" type="button" aria-label="Выбор объекта">${SVG('<circle cx="5" cy="5" r="4" fill="#bbb" stroke="#222"/>', 10, 10)}</button>
						<button class="plain" type="button" aria-label="Следующая страница">${SVG('<path d="M4 8l4-4H5V3l3-3H0l3 3v1H0z" fill="#1111e0"/>', 8, 8)}</button>
					</nav>
				</div>
			</div>
			<div class="bars forms">
				<tool-bar>
					<tool-button icon="design" label="Режим конструктора"></tool-button>
					<tool-button icon="props" label="Свойства" off></tool-button>
					<tool-button icon="code" label="Исходный текст" off></tool-button>
					<tool-separator></tool-separator>
					<tool-button icon="check" label="Флажок"></tool-button>
					<tool-button icon="edit" label="Поле"></tool-button>
					<tool-button icon="btn" label="Кнопка"></tool-button>
					<tool-button icon="radio" label="Переключатель"></tool-button>
					<tool-button icon="list" label="Список"></tool-button>
					<tool-button icon="combo" label="Поле со списком"></tool-button>
					<tool-button icon="toggle" label="Выключатель"></tool-button>
					<tool-button icon="spin" label="Счетчик"></tool-button>
					<tool-button icon="scroll" label="Полоса прокрутки"></tool-button>
					<tool-button icon="bigA" label="Надпись"></tool-button>
					<tool-button icon="picture" label="Рисунок"></tool-button>
					<tool-separator></tool-separator>
					<tool-button icon="tools" label="Другие элементы"></tool-button>
				</tool-bar>
			</div>
			<div class="bars draw">
				<tool-bar>
					<tool-button icon="flipL" label="Отразить" off></tool-button>
					<tool-button icon="flipR" label="Повернуть" off></tool-button>
					<tool-button class="wide" icon="rotate" label="Свободное вращение" off></tool-button>
					<tool-button text drop><span><u>Р</u>исование</span></tool-button>
					<tool-button icon="cursor" label="Выбор объектов"></tool-button>
					<tool-separator></tool-separator>
					<tool-button text drop><span>Автофи<u>г</u>уры</span></tool-button>
					<tool-button icon="line" label="Линия"></tool-button>
					<tool-button icon="arrow" label="Стрелка"></tool-button>
					<tool-button icon="rect" label="Прямоугольник"></tool-button>
					<tool-button icon="oval" label="Овал"></tool-button>
					<tool-button icon="textbox" label="Надпись"></tool-button>
					<tool-button icon="clip" label="Картинка"></tool-button>
					<tool-button icon="photo" label="Рисунок"></tool-button>
					<tool-button icon="wordart" label="Объект WordArt"></tool-button>
					<tool-separator></tool-separator>
					<tool-button class="wide" icon="group" label="Группировать" off></tool-button>
					<tool-button class="wide" icon="ungroup" label="Разгруппировать" off></tool-button>
					<tool-button class="wide" icon="regroup" label="Перегруппировать" off></tool-button>
					<tool-button class="wide" icon="edges" label="Изменить узлы" off></tool-button>
					<tool-button icon="rotate" label="Вращение" off></tool-button>
					<tool-button icon="fill" label="Цвет заливки" split></tool-button>
					<tool-button icon="pen" label="Цвет линий" split></tool-button>
					<tool-button icon="colorA" label="Цвет шрифта" split></tool-button>
					<tool-button icon="mark" label="Выделение" split></tool-button>
					<tool-button icon="lines" label="Тип линии"></tool-button>
					<tool-button icon="scalePic" text off>Изменение масштаба рисунка</tool-button>
					<tool-button icon="crop" label="Обрезка" off></tool-button>
					<tool-button icon="dropper" label="Прозрачный цвет" off></tool-button>
					<tool-button class="wide" icon="contrastUp" label="Увеличить контраст" off></tool-button>
					<tool-button icon="contrastDown" label="Уменьшить контраст" off></tool-button>
					<tool-button icon="brightUp" label="Увеличить яркость" off></tool-button>
					<tool-button class="wide" icon="brightDown" label="Уменьшить яркость" off></tool-button>
					<tool-button icon="crop" label="Обрезать" off></tool-button>
				</tool-bar>
			</div>
			<div class="status">
				<status-cell class="where"><span>Стр. 39</span><span>Разд 1</span><span>35/60</span></status-cell>
				<status-cell class="pos"><span>На 9,9см</span><span>Ст 15</span><span>Кол 9</span></status-cell>
				<status-cell class="mode" off>ЗАП</status-cell>
				<status-cell class="mode" off>ИСПР</status-cell>
				<status-cell class="mode" off>ВДП</status-cell>
				<status-cell class="mode" off>ЗАМ</status-cell>
				<status-cell class="lang">русский (Ро</status-cell>
				<status-cell class="book">${ICONS.spell}</status-cell>
				<status-cell class="blank"></status-cell>
				<status-cell class="blank"></status-cell>
				<status-cell class="blank"></status-cell>
			</div>
			<div class="desk"><span></span><span></span><span></span><span></span></div>
		`;
	}
}

customElements.define('tool-button', ToolButton);
customElements.define('tool-separator', ToolSeparator);
customElements.define('tool-combo', ToolCombo);
customElements.define('tool-bar', ToolBar);
customElements.define('title-bar', TitleBar);
customElements.define('menu-item', MenuItem);
customElements.define('doc-tab', DocTab);
customElements.define('ruler-scale', RulerScale);
customElements.define('doc-page', DocPage);
customElements.define('phrase-diagram', PhraseDiagram);
customElements.define('status-cell', StatusCell);
customElements.define('word-window', WordWindow);
</script>
</body>
</html>
